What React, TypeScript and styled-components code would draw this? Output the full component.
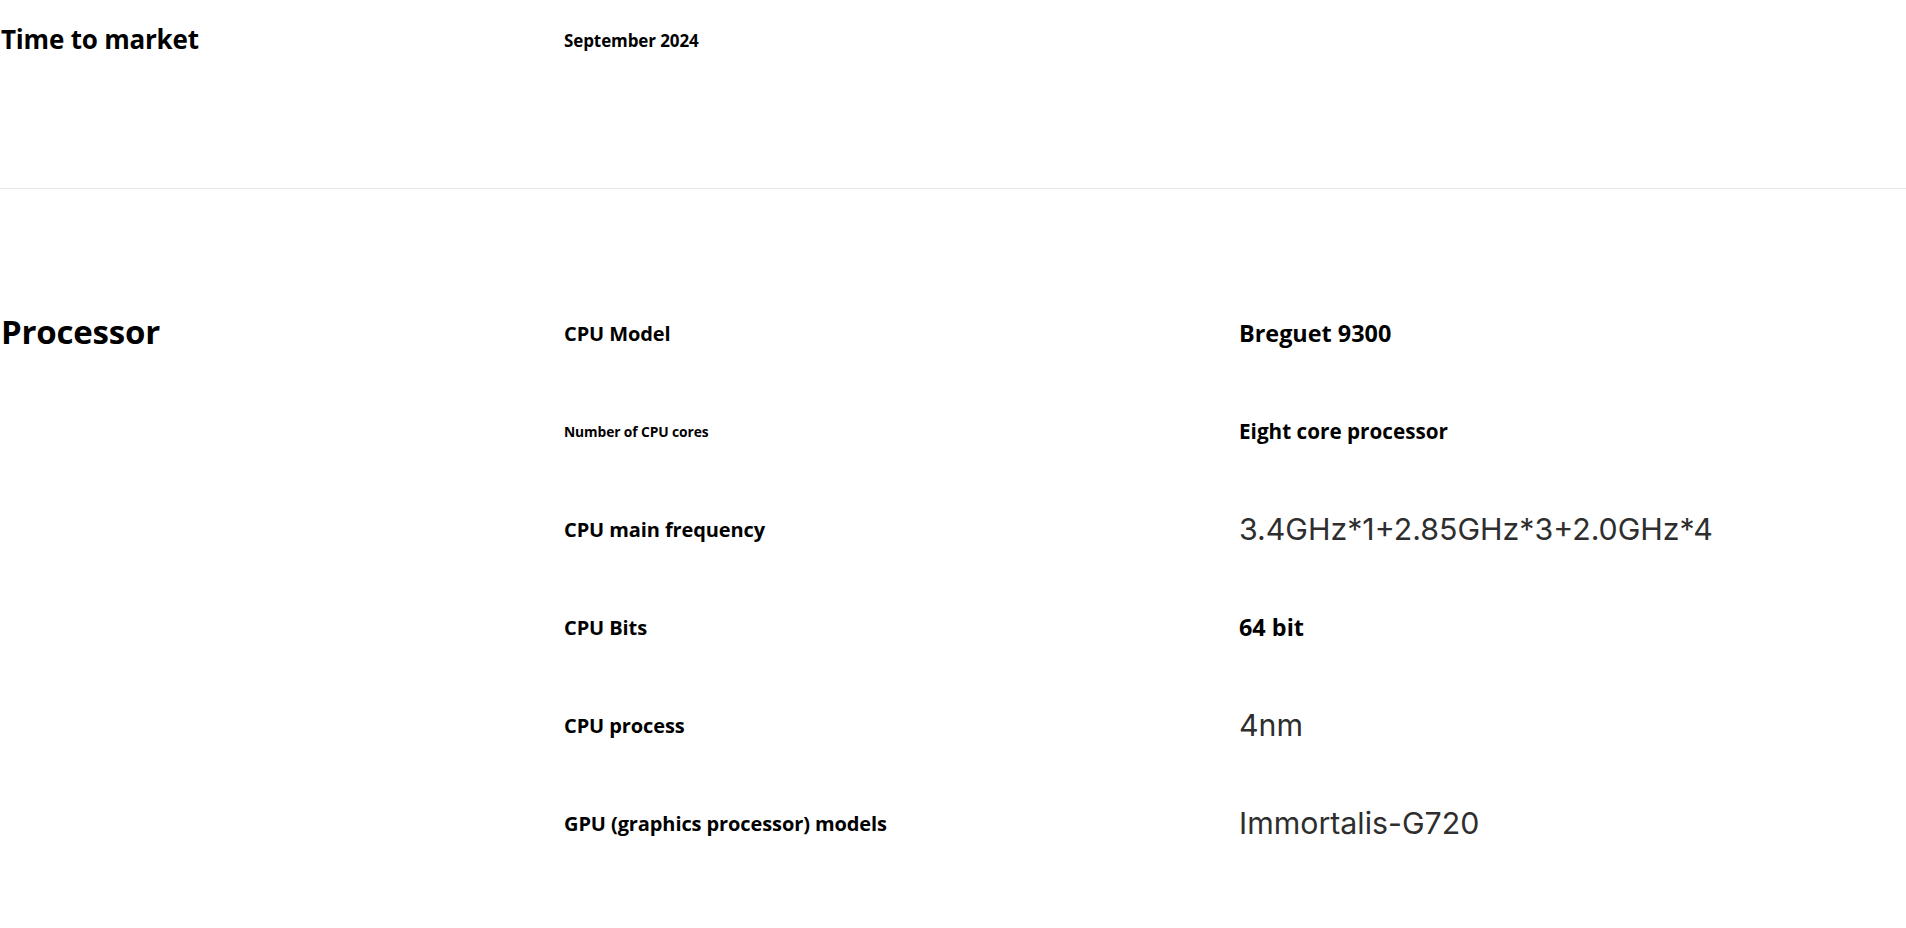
import React from 'react';
import styled, { createGlobalStyle } from 'styled-components';

const Global = createGlobalStyle`
  html, body {
    margin: 0;
    padding: 0;
    background: #ffffff;
  }
  body {
    font-family: "Open Sans", "Liberation Sans", sans-serif;
    color: #000000;
  }
`;

const Page = styled.div`
  width: 100%;
`;

const Section = styled.section<{ $top: number; $height?: number; $line?: boolean }>`
  display: grid;
  grid-template-columns: 564px 675px 1fr;
  box-sizing: border-box;
  padding-top: ${(p) => p.$top}px;
  min-height: ${(p) => (p.$height ? `${p.$height}px` : 'auto')};
  border-bottom: ${(p) => (p.$line ? '1px solid #e8e8e8' : 'none')};
`;

const Title = styled.h2<{ $size: number; $rowH: number }>`
  grid-column: 1;
  grid-row: 1;
  margin: 0;
  height: ${(p) => p.$rowH}px;
  display: flex;
  align-items: center;
  font-size: ${(p) => p.$size}px;
  font-weight: 700;
  letter-spacing: -0.2px;
  padding-left: 1px;
`;

const Rows = styled.div`
  grid-column: 2 / 4;
  display: flex;
  flex-direction: column;
`;

const Row = styled.div<{ $h: number }>`
  display: grid;
  grid-template-columns: 675px 1fr;
  height: ${(p) => p.$h}px;
  align-items: center;
`;

const Label = styled.div<{ $size?: number }>`
  font-size: ${(p) => p.$size ?? 20}px;
  font-weight: 700;
  letter-spacing: -0.1px;
`;

const Value = styled.div<{ $light?: boolean; $size?: number }>`
  font-family: ${(p) => (p.$light ? '"Inter", "Roboto", sans-serif' : '"Open Sans", "Liberation Sans", sans-serif')};
  font-weight: ${(p) => (p.$light ? 400 : 700)};
  font-size: ${(p) => p.$size ?? (p.$light ? 30.3 : 23.4)}px;
  color: ${(p) => (p.$light ? '#2e2e2e' : '#000000')};
`;

type Spec = { label: string; labelSize?: number; value: string; valueSize?: number; light?: boolean };

const specs: Spec[] = [
  { label: 'CPU Model', value: 'Breguet 9300' },
  { label: 'Number of CPU cores', labelSize: 13.8, value: 'Eight core processor', valueSize: 20.7 },
  { label: 'CPU main frequency', value: '3.4GHz*1+2.85GHz*3+2.0GHz*4', light: true },
  { label: 'CPU Bits', value: '64 bit' },
  { label: 'CPU process', value: '4nm', light: true },
  { label: 'GPU (graphics processor) models', value: 'Immortalis-G720', light: true },
];

export default function App() {
  return (
    <Page>
      <Global />
      <Section $top={0} $height={189} $line>
        <Title $size={26} $rowH={78}>Time to market</Title>
        <Rows>
          <Row $h={80}>
            <Label $size={17}>September 2024</Label>
          </Row>
        </Rows>
      </Section>
      <Section $top={95}>
        <Title $size={33} $rowH={94}>Processor</Title>
        <Rows>
          {specs.map((s) => (
            <Row key={s.label} $h={98}>
              <Label $size={s.labelSize}>{s.label}</Label>
              <Value $light={s.light} $size={s.valueSize}>
                {s.value}
              </Value>
            </Row>
          ))}
        </Rows>
      </Section>
    </Page>
  );
}
